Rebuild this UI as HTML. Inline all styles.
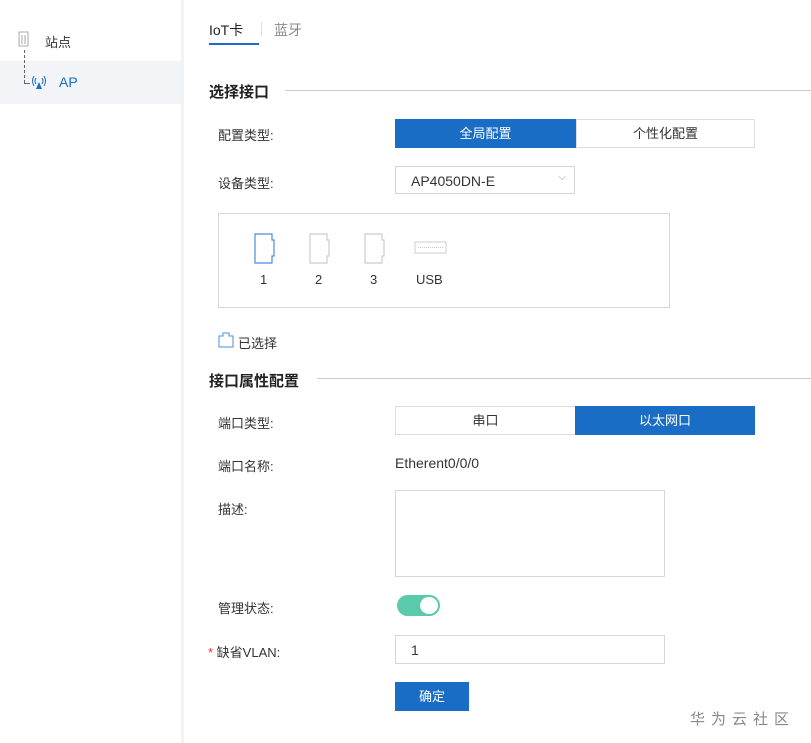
<!DOCTYPE html>
<html><head><meta charset="utf-8"><style>
*{margin:0;padding:0;box-sizing:border-box}
body{width:811px;height:743px;background:#fff;font-family:"Liberation Sans","Noto Sans CJK SC",sans-serif;font-size:13px;color:#333;position:relative;overflow:hidden}
.a{position:absolute}
.side{left:0;top:0;width:184px;height:743px;background:#fff;border-right:3px solid #f2f3f5}
.sel{left:0;top:61px;width:182px;height:43px;background:#f2f4f8}
.lbl{font-size:13px;color:#333}
.btn{height:29px;line-height:27px;text-align:center;border:1px solid #ddd;font-size:13px}
.on{background:#1a6dc4;color:#fff;border-color:#1a6dc4}
.inp{border:1px solid #d6d6d6;background:#fff}
.h{font-size:15px;font-weight:bold;color:#222}
.line{height:1px;background:#ccc}
</style></head><body>
<div class="a side"></div>
<div class="a sel"></div>
<svg class="a" style="left:17px;top:31px" width="14" height="16"><rect x="2" y="1" width="9" height="14" fill="none" stroke="#aaa"/><line x1="5" y1="4" x2="5" y2="13" stroke="#aaa"/><line x1="8" y1="4" x2="8" y2="13" stroke="#aaa"/></svg>
<div class="a lbl" style="left:45px;top:32px">站点</div>
<div class="a" style="left:24px;top:50px;height:33px;border-left:1px dashed #666"></div>
<div class="a" style="left:24px;top:83px;width:6px;border-top:1px dashed #666"></div>
<svg class="a" style="left:31px;top:74px" width="16" height="16"><path d="M8 8 L5 15 H11 Z" fill="#1a6dc4"/><path d="M5 4 Q3 7 5 10 M11 4 Q13 7 11 10 M3 2 Q0 7 3 12 M13 2 Q16 7 13 12" stroke="#1a6dc4" fill="none"/></svg>
<div class="a" style="left:59px;top:74px;font-size:14px;color:#1a6dc4">AP</div>

<div class="a" style="left:209px;top:20px;font-size:14px;color:#222">IoT卡</div>
<div class="a" style="left:209px;top:43px;width:50px;height:2px;background:#1a6dc4"></div>
<div class="a" style="left:261px;top:22px;width:1px;height:14px;background:#ddd"></div>
<div class="a" style="left:274px;top:20px;font-size:14px;color:#888">蓝牙</div>

<div class="a h" style="left:209px;top:81px">选择接口</div>
<div class="a line" style="left:285px;top:90px;width:526px"></div>
<div class="a lbl" style="left:218px;top:125px">配置类型:</div>
<div class="a btn on" style="left:395px;top:119px;width:181px">全局配置</div>
<div class="a btn" style="left:576px;top:119px;width:179px">个性化配置</div>
<div class="a lbl" style="left:218px;top:173px">设备类型:</div>
<div class="a inp" style="left:395px;top:166px;width:180px;height:28px;padding:6px 0 0 15px;font-size:14px">AP4050DN-E<span style="position:absolute;right:8px;top:5px;color:#999;font-size:10px">⌵</span></div>
<div class="a inp" style="left:218px;top:213px;width:452px;height:95px"></div>
<svg class="a" style="left:254px;top:232px" width="200" height="34">
<path d="M1 2 H18 V8 H20 V24 H18 V31 H1 Z" fill="none" stroke="#4a8fd6" stroke-width="1.2"/>
<path d="M56 2 H73 V8 H75 V24 H73 V31 H56 Z" fill="none" stroke="#ccc" stroke-width="1.2"/>
<path d="M111 2 H128 V8 H130 V24 H128 V31 H111 Z" fill="none" stroke="#ccc" stroke-width="1.2"/>
<rect x="161" y="10" width="31" height="11" fill="none" stroke="#ccc"/><line x1="164" y1="15.5" x2="189" y2="15.5" stroke="#ccc" stroke-dasharray="1 1"/>
</svg>
<div class="a lbl" style="left:260px;top:272px">1</div>
<div class="a lbl" style="left:315px;top:272px">2</div>
<div class="a lbl" style="left:370px;top:272px">3</div>
<div class="a lbl" style="left:416px;top:272px">USB</div>
<svg class="a" style="left:218px;top:332px" width="16" height="16"><path d="M1 4 H5 V1 H11 V4 H15 V15 H1 Z" fill="none" stroke="#4a8fd6"/></svg>
<div class="a lbl" style="left:238px;top:333px">已选择</div>

<div class="a h" style="left:209px;top:370px">接口属性配置</div>
<div class="a line" style="left:317px;top:378px;width:494px"></div>
<div class="a lbl" style="left:218px;top:413px">端口类型:</div>
<div class="a btn" style="left:395px;top:406px;width:181px">串口</div>
<div class="a btn on" style="left:575px;top:406px;width:180px">以太网口</div>
<div class="a lbl" style="left:218px;top:456px">端口名称:</div>
<div class="a" style="left:395px;top:455px;font-size:14px">Etherent0/0/0</div>
<div class="a lbl" style="left:218px;top:499px">描述:</div>
<div class="a inp" style="left:395px;top:490px;width:270px;height:87px"></div>
<div class="a lbl" style="left:218px;top:598px">管理状态:</div>
<div class="a" style="left:397px;top:595px;width:43px;height:21px;border-radius:11px;background:#5bc9ab"></div>
<div class="a" style="left:420px;top:597px;width:18px;height:17px;border-radius:50%;background:#fff"></div>
<div class="a lbl" style="left:208px;top:642px"><span style="color:#e33">*</span> 缺省VLAN:</div>
<div class="a inp" style="left:395px;top:635px;width:270px;height:29px;padding:6px 0 0 15px;font-size:14px">1</div>
<div class="a btn on" style="left:395px;top:682px;width:74px;height:29px">确定</div>
<div class="a" style="left:690px;top:708px;font-size:15px;color:#888;letter-spacing:6px">华为云社区</div>
</body></html>
